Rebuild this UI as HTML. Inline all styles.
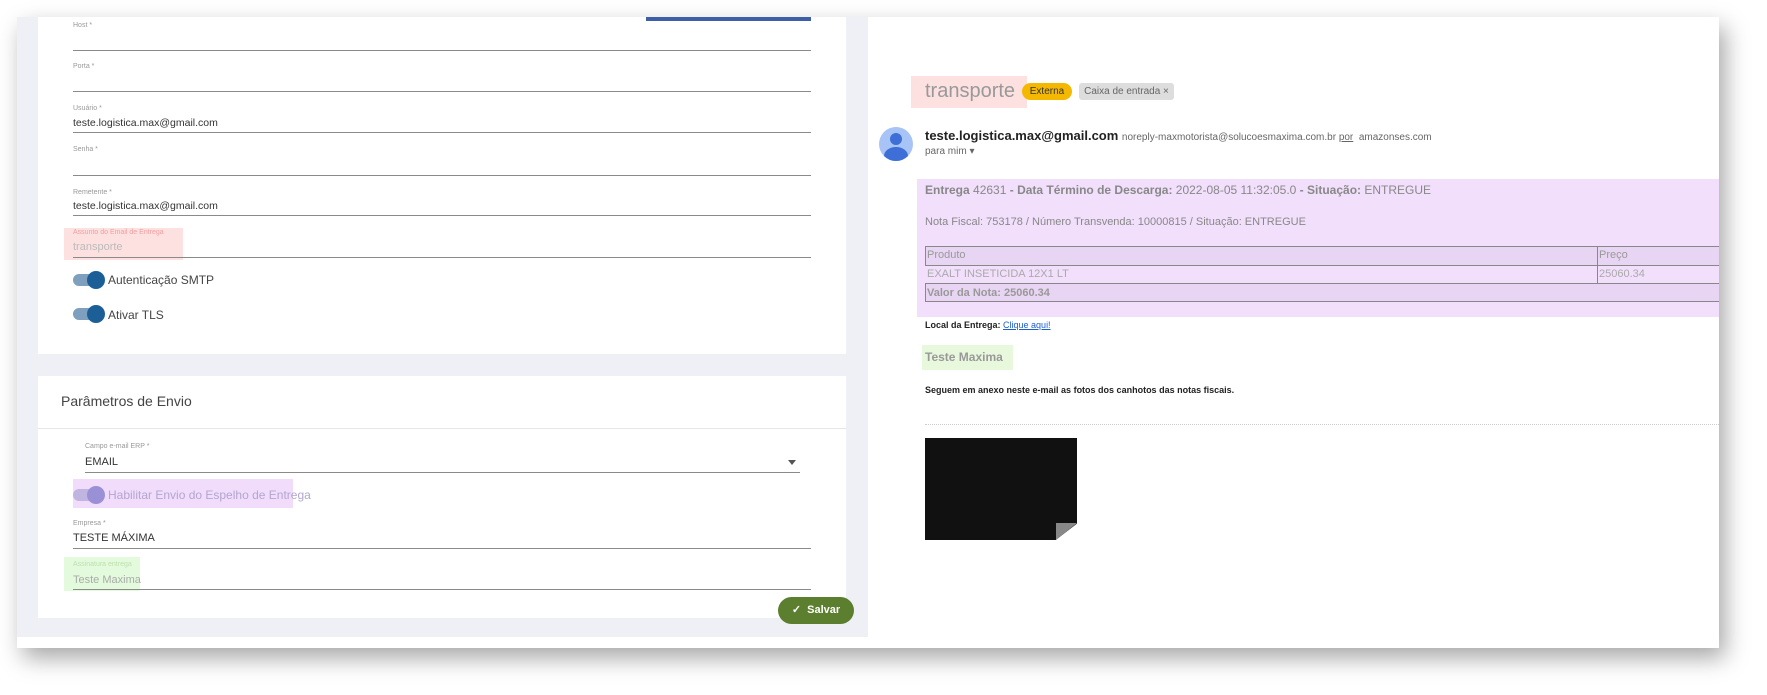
<!DOCTYPE html>
<html><head><meta charset="utf-8"><style>
*{margin:0;padding:0;box-sizing:border-box}
body{width:1767px;height:695px;background:#fff;position:relative;overflow:hidden;font-family:"Liberation Sans",sans-serif}
.a{position:absolute}
.lbl{position:absolute;font-size:7px;color:#999}
.val{position:absolute;font-size:11px;color:#333}
.line{position:absolute;height:1px;background:#8a8a8a}
.tg{position:absolute;width:30px;height:12px;border-radius:6px;background:#7f9fbe}
.tg::after{content:"";position:absolute;right:-2px;top:-3px;width:18px;height:18px;border-radius:50%;background:#1c5e96}
</style></head><body>
<div class="a" style="left:17px;top:17px;width:1702px;height:631px;box-shadow:6px 10px 22px rgba(0,0,0,.35);background:#fff"></div>
<div class="a" style="left:17px;top:17px;width:851px;height:620px;background:#eef0f5"></div>
<div class="a" style="left:868px;top:17px;width:851px;height:631px;background:#fff"></div>
<!-- card1 -->
<div class="a" style="left:38px;top:17px;width:808px;height:337px;background:#fff"></div>
<div class="a" style="left:646px;top:17px;width:165px;height:4px;background:#3d5fa8"></div>
<div class="a" style="left:64px;top:228px;width:119px;height:32px;background:#fde0e0"></div>
<div class="lbl" style="left:73px;top:22px">Host *</div><div class="line" style="left:73px;top:50px;width:738px"></div>
<div class="lbl" style="left:73px;top:63px">Porta *</div><div class="line" style="left:73px;top:91px;width:738px"></div>
<div class="lbl" style="left:73px;top:105px">Usuário *</div><div class="val" style="left:73px;top:117px;font-size:10.5px">teste.logistica.max@gmail.com</div><div class="line" style="left:73px;top:132px;width:738px"></div>
<div class="lbl" style="left:73px;top:146px">Senha *</div><div class="line" style="left:73px;top:175px;width:738px"></div>
<div class="lbl" style="left:73px;top:189px">Remetente *</div><div class="val" style="left:73px;top:200px;font-size:10.5px">teste.logistica.max@gmail.com</div><div class="line" style="left:73px;top:215px;width:738px"></div>
<div class="lbl" style="left:73px;top:229px;color:#f0a0a0">Assunto do Email de Entrega</div><div class="val" style="left:73px;top:241px;color:#bbb">transporte</div><div class="line" style="left:73px;top:257px;width:738px"></div>
<div class="tg" style="left:73px;top:274px"></div><div class="val" style="left:108px;top:273px;font-size:12px;color:#444">Autenticação SMTP</div>
<div class="tg" style="left:73px;top:308px"></div><div class="val" style="left:108px;top:308px;font-size:12px;color:#444">Ativar TLS</div>
<!-- card2 -->
<div class="a" style="left:38px;top:376px;width:808px;height:242px;background:#fff"></div>
<div class="val" style="left:61px;top:393px;font-size:14px;color:#444">Parâmetros de Envio</div>
<div class="a" style="left:38px;top:428px;width:808px;height:1px;background:#e6e6e6"></div>
<div class="lbl" style="left:85px;top:443px">Campo e-mail ERP *</div><div class="val" style="left:85px;top:456px">EMAIL</div><div class="line" style="left:85px;top:472px;width:715px"></div>
<div class="a" style="left:788px;top:460px;border-left:4px solid transparent;border-right:4px solid transparent;border-top:5px solid #555"></div>
<div class="a" style="left:73px;top:479px;width:220px;height:29px;background:#f1dcfb"></div>
<div class="a" style="left:73px;top:489px;width:30px;height:12px;border-radius:6px;background:#c0b5e0"></div>
<div class="a" style="left:87px;top:486px;width:18px;height:18px;border-radius:50%;background:#9a90d6"></div>
<div class="val" style="left:108px;top:488px;font-size:12px;color:#b3a6cf">Habilitar Envio do Espelho de Entrega</div>
<div class="lbl" style="left:73px;top:520px">Empresa *</div><div class="val" style="left:73px;top:532px">TESTE MÁXIMA</div><div class="line" style="left:73px;top:548px;width:738px"></div>
<div class="a" style="left:64px;top:557px;width:76px;height:34px;background:#e3fbdc"></div>
<div class="lbl" style="left:73px;top:561px;color:#bde0b0">Assinatura entrega</div><div class="val" style="left:73px;top:574px;color:#aaa">Teste Maxima</div><div class="line" style="left:73px;top:589px;width:738px"></div>
<div class="a" style="left:778px;top:597px;width:76px;height:27px;border-radius:14px;background:#5b7f2e;color:#fff;font-size:11px;font-weight:bold;line-height:27px;text-align:center">✓&nbsp; Salvar</div>
<!-- right -->
<div class="a" style="left:911px;top:76px;width:116px;height:32px;background:#fde0e0"></div>
<div class="val" style="left:925px;top:80px;font-size:20px;color:#999">transporte</div>
<div class="a" style="left:1022px;top:83px;width:50px;height:17px;border-radius:9px;background:#f5b800;font-size:10px;line-height:17px;text-align:center;color:#333">Externa</div>
<div class="a" style="left:1079px;top:83px;width:95px;height:17px;border-radius:3px;background:#ddd;font-size:10px;line-height:17px;text-align:center;color:#666">Caixa de entrada ×</div>
<div class="a" style="left:879px;top:127px;width:34px;height:34px;border-radius:50%;background:#a8c3f5;overflow:hidden"><div class="a" style="left:11px;top:6px;width:12px;height:12px;border-radius:50%;background:#3d6fd6"></div><div class="a" style="left:5px;top:20px;width:24px;height:18px;border-radius:50%;background:#3d6fd6"></div></div>
<div class="val" style="left:925px;top:128px;font-size:13px;font-weight:bold;color:#222">teste.logistica.max@gmail.com <span style="font-weight:normal;font-size:10px;color:#666">noreply-maxmotorista@solucoesmaxima.com.br <u>por</u>&nbsp; amazonses.com</span></div>
<div class="val" style="left:925px;top:146px;font-size:10px;color:#666">para mim ▾</div>
<div class="a" style="left:917px;top:179px;width:802px;height:138px;background:#f1dffb"></div>
<div class="val" style="left:925px;top:183px;font-size:12px;color:#888"><b>Entrega</b> 42631 <b>- Data Término de Descarga:</b> 2022-08-05 11:32:05.0 <b>- Situação:</b> ENTREGUE</div>
<div class="val" style="left:925px;top:216px;font-size:11px;color:#888">Nota Fiscal: 753178 / Número Transvenda: 10000815 / Situação: ENTREGUE</div>
<div class="a" style="left:925px;top:246px;width:794px;height:56px;border:1px solid #888;border-right:none;background:#e8d5f3"></div>
<div class="a" style="left:925px;top:265px;width:794px;height:19px;border-top:1px solid #888;border-bottom:1px solid #888;background:#f1dffb"></div>
<div class="a" style="left:1597px;top:246px;width:1px;height:38px;background:#888"></div>
<div class="val" style="left:927px;top:249px;font-size:11px;color:#999">Produto</div><div class="val" style="left:1599px;top:249px;font-size:11px;color:#999">Preço</div>
<div class="val" style="left:927px;top:268px;font-size:11px;color:#aaa">EXALT INSETICIDA 12X1 LT</div><div class="val" style="left:1599px;top:268px;font-size:11px;color:#aaa">25060.34</div>
<div class="val" style="left:927px;top:287px;font-size:11px;font-weight:bold;color:#999">Valor da Nota: 25060.34</div>
<div class="val" style="left:925px;top:320px;font-size:9px;color:#222;font-weight:bold">Local da Entrega: <u style="color:#1a5fd0;font-weight:normal">Clique aqui!</u></div>
<div class="a" style="left:922px;top:345px;width:91px;height:25px;background:#e8f8dc"></div>
<div class="val" style="left:925px;top:350px;font-size:12px;font-weight:bold;color:#999">Teste Maxima</div>
<div class="val" style="left:925px;top:385px;font-size:9px;color:#222;font-weight:bold">Seguem em anexo neste e-mail as fotos dos canhotos das notas fiscais.</div>
<div class="a" style="left:925px;top:424px;width:794px;height:1px;border-top:1px dotted #ccc"></div>
<div class="a" style="left:925px;top:438px;width:152px;height:102px;background:#111;clip-path:polygon(0 0,100% 0,100% 84%,86% 100%,0 100%)"></div>
<div class="a" style="left:1056px;top:523px;width:21px;height:17px;background:#888;clip-path:polygon(100% 0,0 100%,0 0)"></div>
</body></html>
